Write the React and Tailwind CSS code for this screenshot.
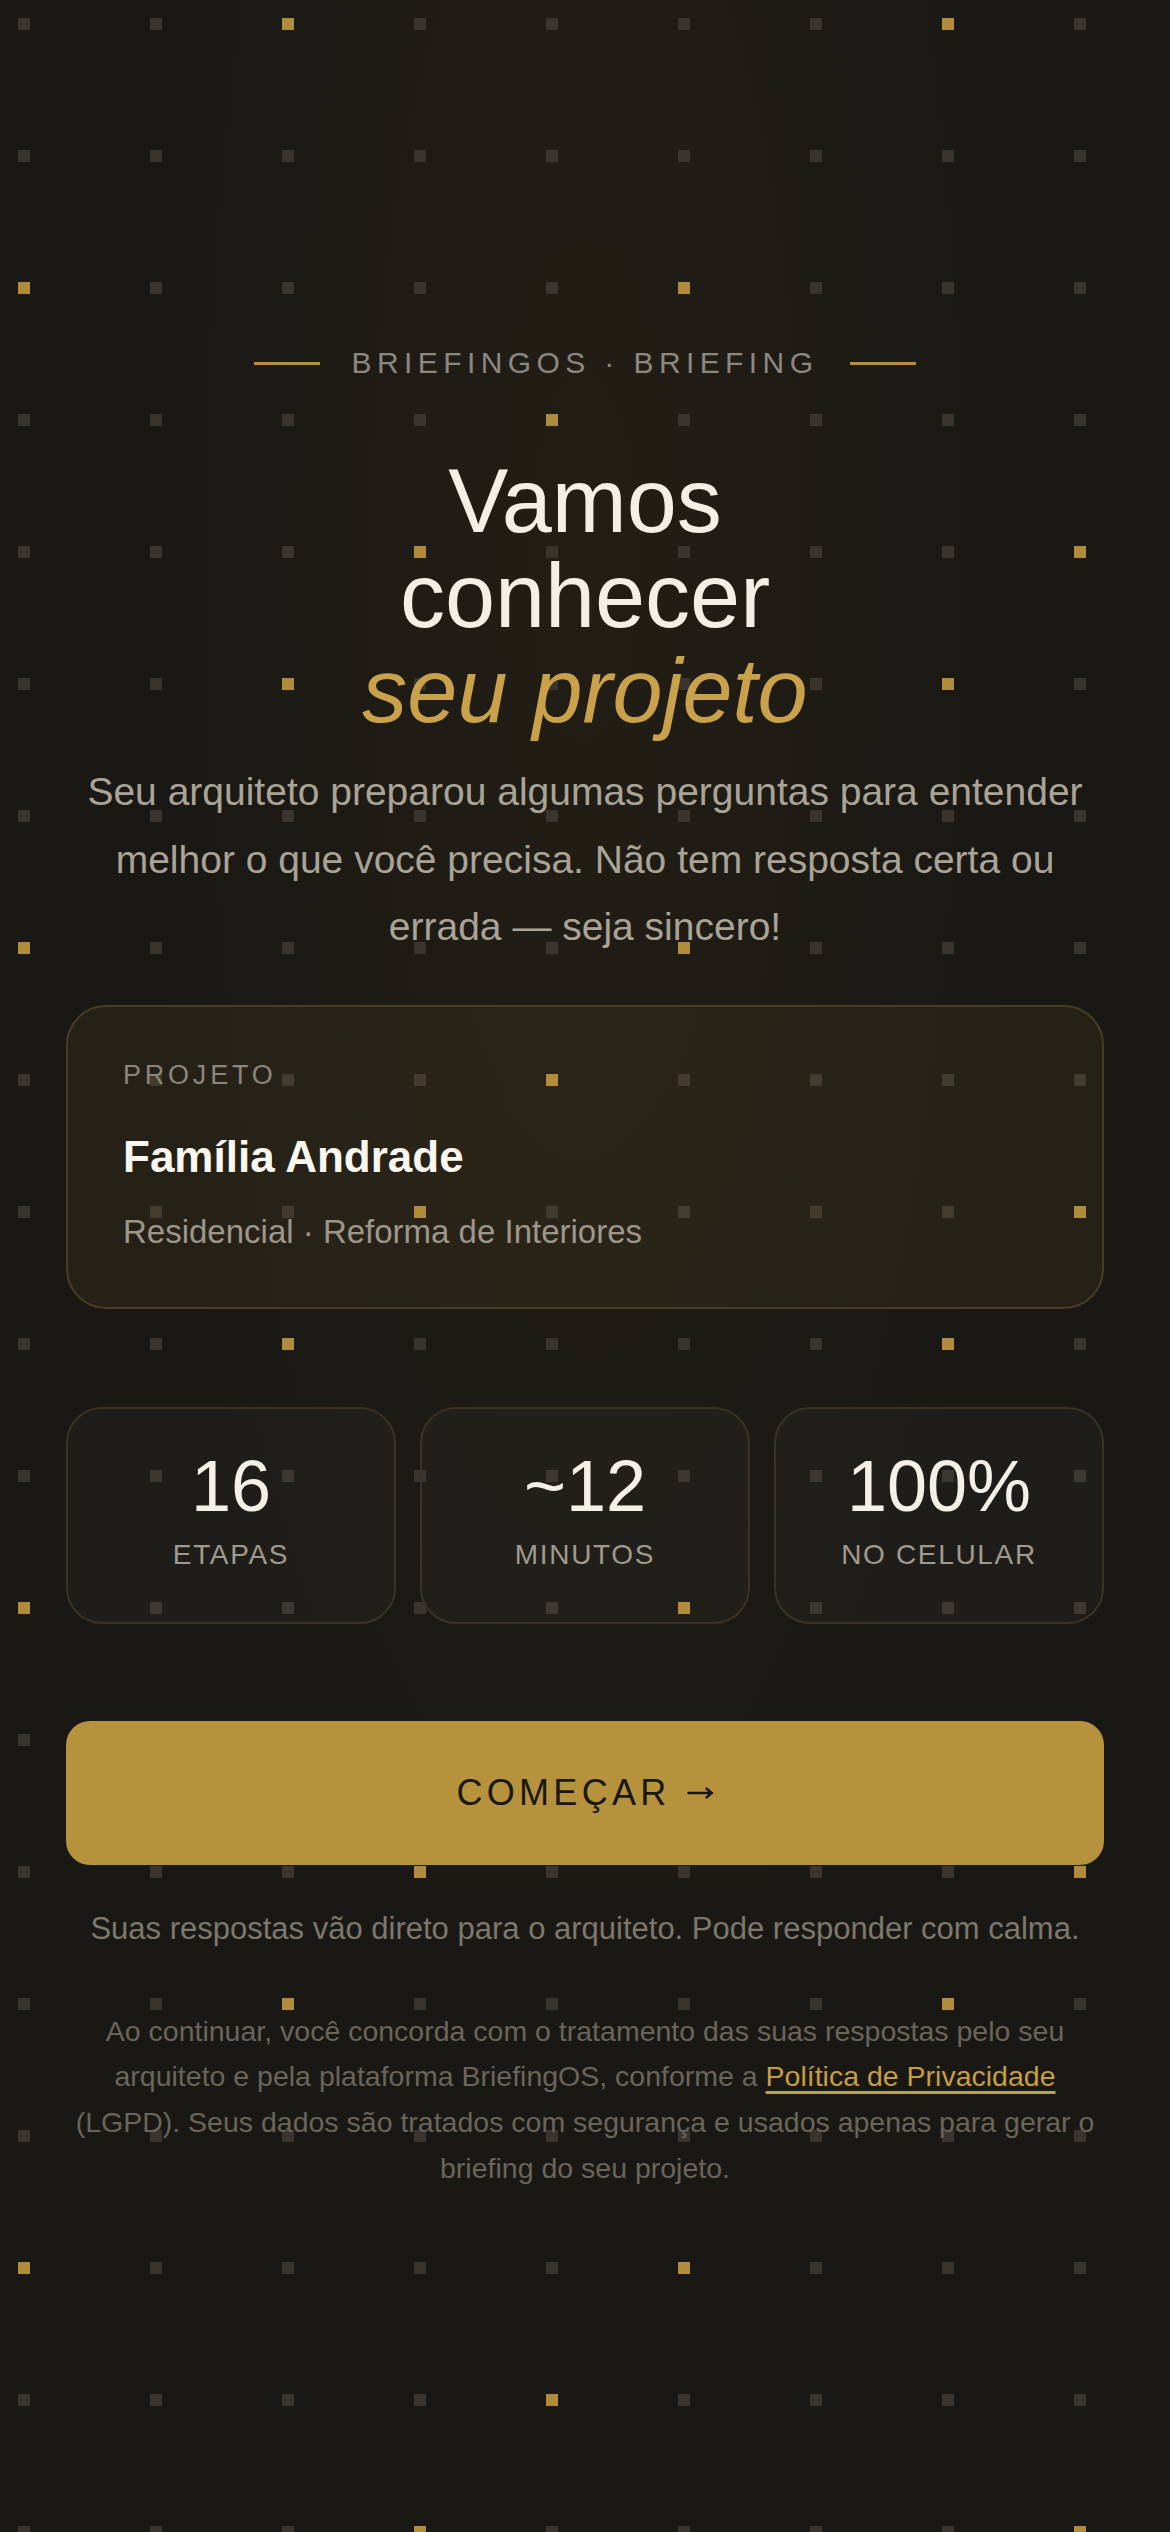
import React from "react";

const ROWS = 20;
const COLS = 9;

// which column (mod 5) gets a gold dot, per row (mod 5); null = none
const goldCol = [2, null, 0, 4, 3];

const DotGrid = () => {
  const dots = [];
  for (let r = 0; r < ROWS; r++) {
    for (let c = 0; c < COLS; c++) {
      const gold = goldCol[r % 5] !== null && c % 5 === goldCol[r % 5];
      dots.push(
        <rect
          key={`${r}-${c}`}
          x={18 + c * 132}
          y={18 + r * 132}
          width="12"
          height="12"
          fill={gold ? "#b08c3a" : "#39342d"}
        />
      );
    }
  }
  return (
    <svg
      className="absolute inset-0 h-full w-full"
      width="1170"
      height="2532"
      viewBox="0 0 1170 2532"
      preserveAspectRatio="xMinYMin slice"
    >
      {dots}
    </svg>
  );
};

const Stat = ({ value, label }) => (
  <div className="flex flex-col items-center rounded-[36px] border-2 border-[#3a3225] bg-[rgba(255,255,255,0.025)] pt-[41px] pb-[53px]">
    <div className="text-[72px] leading-none text-[#f4f0e8]">{value}</div>
    <div className="mt-[19px] text-[28px] leading-none tracking-[0.06em] text-[#a09a8e]">
      {label}
    </div>
  </div>
);

export default function App() {
  return (
    <div className="relative min-h-[2532px] overflow-hidden bg-[#1a1814] font-['Liberation_Sans',Arial,sans-serif]">
      <div className="absolute inset-0 bg-[radial-gradient(ellipse_at_50%_22%,rgba(184,148,62,0.05),transparent_55%)]" />
      <DotGrid />

      <main className="relative flex flex-col items-center px-[66px] pt-[348px]">
        {/* eyebrow */}
        <div className="flex items-center gap-[32px]">
          <span className="h-[3px] w-[66px] bg-[#b38f3c]" />
          <span className="text-[30px] leading-none tracking-[0.18em] text-[#8c8881]">
            BRIEFINGOS · BRIEFING
          </span>
          <span className="h-[3px] w-[66px] bg-[#b38f3c]" />
        </div>

        <h1 className="mt-[76px] text-center text-[90px] font-normal leading-[95px] text-[#f3efe6]">
          <span className="block">Vamos</span>
          <span className="block">conhecer</span>
          <em className="block italic text-[#c9a14a]">seu projeto</em>
        </h1>

        <p className="mt-[19px] text-center text-[39px] leading-[67.5px] text-[#aaa497]">
          Seu arquiteto preparou algumas perguntas para entender melhor o que
          você precisa. Não tem resposta certa ou errada — seja sincero!
        </p>

        {/* project card */}
        <div className="mt-[44px] w-full rounded-[40px] border-2 border-[#483d22] bg-[rgba(184,148,62,0.075)] px-[55px] pt-[55px] pb-[59px]">
          <div className="text-[27px] leading-none tracking-[0.14em] text-[#8a867c]">
            PROJETO
          </div>
          <div className="mt-[46px] text-[44px] font-bold leading-none text-[#faf7f0]">
            Família Andrade
          </div>
          <div className="mt-[36px] text-[33px] leading-none text-[#9d978b]">
            Residencial · Reforma de Interiores
          </div>
        </div>

        {/* stats */}
        <div className="mt-[98px] grid w-full grid-cols-3 gap-[24px]">
          <Stat value="16" label="ETAPAS" />
          <Stat value="~12" label="MINUTOS" />
          <Stat value="100%" label="NO CELULAR" />
        </div>

        <button className="mt-[97px] flex h-[144px] w-full items-center justify-center rounded-[24px] bg-[#b6923c] text-[#1a1712]">
          <span className="text-[36px] leading-none tracking-[0.12em]">COMEÇAR</span>
          <svg
            className="ml-[16px]"
            width="27"
            height="14"
            viewBox="0 0 27 14"
            fill="none"
            stroke="currentColor"
            strokeWidth="2.5"
            strokeLinecap="round"
            strokeLinejoin="round"
          >
            <path d="M1.5 7h23.5M19.5 2.5l5 4.5-5 4.5" />
          </svg>
        </button>

        <p className="mt-[48px] text-center text-[31px] leading-none text-[#7d786e]">
          Suas respostas vão direto para o arquiteto. Pode responder com calma.
        </p>

        <p className="mt-[65px] text-center text-[28.5px] leading-[45.7px] text-[#6a655b]">
          Ao continuar, você concorda com o tratamento das suas respostas pelo
          seu arquiteto e pela plataforma BriefingOS, conforme a{" "}
          <a
            href="#"
            className="text-[#c49d45] underline decoration-[2.5px] underline-offset-[5px]"
          >
            Política de Privacidade
          </a>{" "}
          (LGPD). Seus dados são tratados com segurança e usados apenas para
          gerar o briefing do seu projeto.
        </p>
      </main>
    </div>
  );
}
